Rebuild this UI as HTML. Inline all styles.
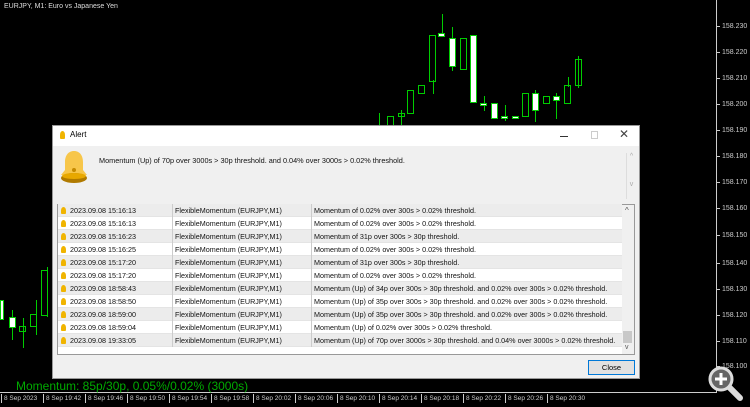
<!DOCTYPE html><html><head><style>
*{margin:0;padding:0;box-sizing:border-box}
body{width:750px;height:407px;background:#000;position:relative;overflow:hidden;font-family:"Liberation Sans",sans-serif;}
.a{position:absolute}
.p{position:absolute;left:717px;color:#ccc;font-size:7px;line-height:8px}
.p:before{content:"";display:inline-block;width:3px;height:1px;background:#ccc;vertical-align:middle;margin-right:2px}
.t{position:absolute;top:394px;color:#ccc;font-size:6.5px;border-left:1px solid #ccc;padding-left:2px;height:9px;line-height:9px}
.c{position:absolute;border:1px solid #0c0;width:7px}
.w{position:absolute;background:#fff;border:1px solid #0c0;width:7px}
.k{position:absolute;width:1px;background:#0c0}
.row{position:absolute;left:58px;width:564px;height:13px;font-size:7.2px;line-height:13px;color:#111;border-bottom:1px solid #e4e4e4}
.row span{position:absolute;top:0;white-space:nowrap}
.row .b{left:3px;top:3px;width:5px;height:7px;background:#f0b400;border-radius:50% 50% 1px 1px}
.row .d{left:12px}
.row .e{left:114px;border-left:1px solid #ccc;padding-left:2px;height:13px}
.row .f{left:253px;border-left:1px solid #ccc;padding-left:2px;height:13px}
</style></head><body>
<div class="a" style="left:4px;top:3px;color:#ddd;font-size:7px">EURJPY, M1:  Euro vs Japanese Yen</div>
<div class="a" style="left:716px;top:0;width:1px;height:393px;background:#ccc"></div>
<div class="a" style="left:0;top:392px;width:717px;height:1px;background:#ccc"></div>
<div class="p" style="top:23px">158.230</div><div class="p" style="top:49px">158.220</div><div class="p" style="top:75px">158.210</div><div class="p" style="top:101px">158.200</div><div class="p" style="top:127px">158.190</div><div class="p" style="top:153px">158.180</div><div class="p" style="top:179px">158.170</div><div class="p" style="top:205px">158.160</div><div class="p" style="top:232px">158.150</div><div class="p" style="top:260px">158.140</div><div class="p" style="top:286px">158.130</div><div class="p" style="top:312px">158.120</div><div class="p" style="top:338px">158.110</div><div class="p" style="top:363px">158.100</div>
<div class="t" style="left:1px">8 Sep 2023</div><div class="t" style="left:43px">8 Sep 19:42</div><div class="t" style="left:85px">8 Sep 19:46</div><div class="t" style="left:127px">8 Sep 19:50</div><div class="t" style="left:169px">8 Sep 19:54</div><div class="t" style="left:211px">8 Sep 19:58</div><div class="t" style="left:253px">8 Sep 20:02</div><div class="t" style="left:295px">8 Sep 20:06</div><div class="t" style="left:337px">8 Sep 20:10</div><div class="t" style="left:379px">8 Sep 20:14</div><div class="t" style="left:421px">8 Sep 20:18</div><div class="t" style="left:463px">8 Sep 20:22</div><div class="t" style="left:505px">8 Sep 20:26</div><div class="t" style="left:547px">8 Sep 20:30</div>
<div class="k" style="left:442px;top:14px;height:20px"></div>
<div class="k" style="left:433px;top:80px;height:14px"></div>
<div class="k" style="left:452px;top:27px;height:44px"></div>
<div class="k" style="left:484px;top:96px;height:15px"></div>
<div class="k" style="left:505px;top:105px;height:16px"></div>
<div class="k" style="left:535px;top:90px;height:32px"></div>
<div class="k" style="left:556px;top:93px;height:26px"></div>
<div class="k" style="left:568px;top:77px;height:10px"></div>
<div class="k" style="left:578px;top:56px;height:32px"></div>
<div class="k" style="left:401px;top:110px;height:15px"></div>
<div class="k" style="left:379px;top:113px;height:12px"></div>
<div class="c" style="left:429px;top:35px;height:47px"></div>
<div class="w" style="left:438px;top:33px;height:4px"></div>
<div class="w" style="left:449px;top:38px;height:29px"></div>
<div class="c" style="left:460px;top:38px;height:32px"></div>
<div class="w" style="left:470px;top:35px;height:68px"></div>
<div class="w" style="left:480px;top:103px;height:3px"></div>
<div class="w" style="left:491px;top:103px;height:16px"></div>
<div class="w" style="left:501px;top:116px;height:3px"></div>
<div class="w" style="left:512px;top:116px;height:3px"></div>
<div class="c" style="left:522px;top:93px;height:24px"></div>
<div class="w" style="left:532px;top:93px;height:18px"></div>
<div class="c" style="left:543px;top:96px;height:8px"></div>
<div class="w" style="left:553px;top:96px;height:5px"></div>
<div class="c" style="left:564px;top:85px;height:19px"></div>
<div class="c" style="left:575px;top:59px;height:27px"></div>
<div class="c" style="left:407px;top:90px;height:24px"></div>
<div class="c" style="left:418px;top:85px;height:9px"></div>
<div class="c" style="left:398px;top:113px;height:4px"></div>
<div class="c" style="left:387px;top:116px;height:10px"></div>
<div class="k" style="left:47px;top:267px;height:50px"></div>
<div class="k" style="left:36px;top:300px;height:35px"></div>
<div class="k" style="left:23px;top:318px;height:30px"></div>
<div class="k" style="left:12px;top:310px;height:30px"></div>
<div class="w" style="left:0px;top:300px;height:20px;width:4px"></div>
<div class="w" style="left:9px;top:317px;height:11px"></div>
<div class="c" style="left:19px;top:326px;height:6px"></div>
<div class="c" style="left:30px;top:314px;height:13px"></div>
<div class="c" style="left:41px;top:270px;height:46px"></div>
<svg class="a" style="left:706px;top:364px" width="40" height="40" viewBox="0 0 40 40"><line x1="22" y1="22" x2="34" y2="34" stroke="#ddd" stroke-width="6" stroke-linecap="round"/><circle cx="15" cy="15" r="11" fill="#666" stroke="#ddd" stroke-width="3"/><path d="M9 15h12M15 9v12" stroke="#fff" stroke-width="3"/></svg>
<div class="a" style="left:52px;top:125px;width:588px;height:254px;background:#f0f0f0;border:1px solid #999">
 <div class="a" style="left:0;top:0;width:586px;height:20px;background:#fff"></div>
 <div class="a" style="left:7px;top:5px;width:5px;height:8px;background:#f0b400;border-radius:50% 50% 1px 1px"></div>
 <div class="a" style="left:17px;top:4px;font-size:8px;color:#000">Alert</div>
 <div class="a" style="left:507px;top:10px;width:8px;height:1px;background:#333"></div>
 <div class="a" style="left:538px;top:5px;width:7px;height:8px;border:1px solid #ccc"></div>
 <div class="a" style="left:566px;top:1px;font-size:12px;color:#444">✕</div>
 <svg class="a" style="left:7px;top:24px" width="28" height="34" viewBox="0 0 28 34"><path d="M14 1c-6 0-9 5-9 11v8l-4 5h26l-4-5v-8c0-6-3-11-9-11z" fill="#f7c64a"/><ellipse cx="14" cy="28" rx="13" ry="5" fill="#b07a00"/><ellipse cx="14" cy="26" rx="12" ry="3" fill="#e8a800"/><circle cx="14" cy="20" r="2" fill="#c58a00"/></svg>
 <div class="a" style="left:46px;top:30px;font-size:7.3px;color:#111">Momentum (Up) of 70p over 3000s &gt; 30p threshold. and 0.04% over 3000s &gt; 0.02% threshold.</div>
 <div class="a" style="left:573px;top:27px;width:10px;height:46px;border-left:1px solid #ddd;color:#aaa;font-size:7px;text-align:center">^<br><br><br><br>v</div>
 <div class="a" style="left:4px;top:78px;width:578px;height:151px;background:#fff;border:1px solid #999"></div>
 <div class="a" style="left:569px;top:79px;width:12px;height:149px;background:#f0f0f0"></div>
 <div class="a" style="left:570px;top:205px;width:9px;height:12px;background:#c8c8c8"></div>
 <div class="a" style="left:572px;top:80px;font-size:8px;color:#555">^</div>
 <div class="a" style="left:572px;top:218px;font-size:7px;color:#555">v</div>
 <div class="a" style="left:535px;top:234px;width:47px;height:15px;border:1px solid #0078d7;background:#e1e1e1;font-size:7.5px;text-align:center;line-height:13px">Close</div>
</div>
<div class="a" style="left:16px;top:379px;color:#0a0;font-size:12px;line-height:14px;white-space:nowrap">Momentum: 85p/30p, 0.05%/0.02% (3000s)</div>
<div class="row" style="top:204px;background:#ececec"><span class="b"></span><span class="d">2023.09.08 15:16:13</span><span class="e">FlexibleMomentum (EURJPY,M1)</span><span class="f">Momentum of 0.02% over 300s &gt; 0.02% threshold.</span></div>
<div class="row" style="top:217px;background:#fff"><span class="b"></span><span class="d">2023.09.08 15:16:13</span><span class="e">FlexibleMomentum (EURJPY,M1)</span><span class="f">Momentum of 0.02% over 300s &gt; 0.02% threshold.</span></div>
<div class="row" style="top:230px;background:#ececec"><span class="b"></span><span class="d">2023.09.08 15:16:23</span><span class="e">FlexibleMomentum (EURJPY,M1)</span><span class="f">Momentum of 31p over 300s &gt; 30p threshold.</span></div>
<div class="row" style="top:243px;background:#fff"><span class="b"></span><span class="d">2023.09.08 15:16:25</span><span class="e">FlexibleMomentum (EURJPY,M1)</span><span class="f">Momentum of 0.02% over 300s &gt; 0.02% threshold.</span></div>
<div class="row" style="top:256px;background:#ececec"><span class="b"></span><span class="d">2023.09.08 15:17:20</span><span class="e">FlexibleMomentum (EURJPY,M1)</span><span class="f">Momentum of 31p over 300s &gt; 30p threshold.</span></div>
<div class="row" style="top:269px;background:#fff"><span class="b"></span><span class="d">2023.09.08 15:17:20</span><span class="e">FlexibleMomentum (EURJPY,M1)</span><span class="f">Momentum of 0.02% over 300s &gt; 0.02% threshold.</span></div>
<div class="row" style="top:282px;background:#ececec"><span class="b"></span><span class="d">2023.09.08 18:58:43</span><span class="e">FlexibleMomentum (EURJPY,M1)</span><span class="f">Momentum (Up) of 34p over 300s &gt; 30p threshold. and 0.02% over 300s &gt; 0.02% threshold.</span></div>
<div class="row" style="top:295px;background:#fff"><span class="b"></span><span class="d">2023.09.08 18:58:50</span><span class="e">FlexibleMomentum (EURJPY,M1)</span><span class="f">Momentum (Up) of 35p over 300s &gt; 30p threshold. and 0.02% over 300s &gt; 0.02% threshold.</span></div>
<div class="row" style="top:308px;background:#ececec"><span class="b"></span><span class="d">2023.09.08 18:59:00</span><span class="e">FlexibleMomentum (EURJPY,M1)</span><span class="f">Momentum (Up) of 35p over 300s &gt; 30p threshold. and 0.02% over 300s &gt; 0.02% threshold.</span></div>
<div class="row" style="top:321px;background:#fff"><span class="b"></span><span class="d">2023.09.08 18:59:04</span><span class="e">FlexibleMomentum (EURJPY,M1)</span><span class="f">Momentum (Up) of 0.02% over 300s &gt; 0.02% threshold.</span></div>
<div class="row" style="top:334px;background:#ececec"><span class="b"></span><span class="d">2023.09.08 19:33:05</span><span class="e">FlexibleMomentum (EURJPY,M1)</span><span class="f">Momentum (Up) of 70p over 3000s &gt; 30p threshold. and 0.04% over 3000s &gt; 0.02% threshold.</span></div>
</body></html>
